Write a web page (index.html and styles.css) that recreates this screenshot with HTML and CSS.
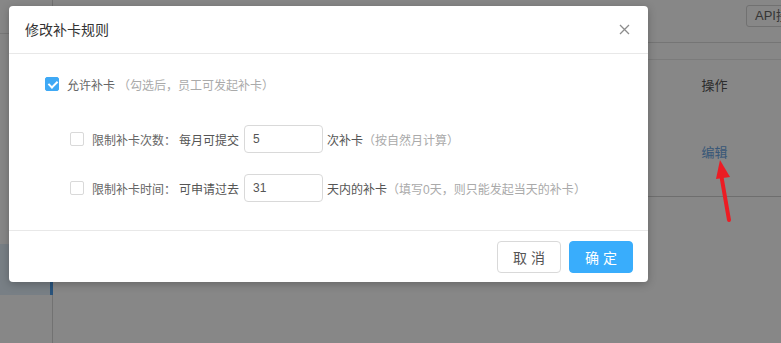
FILE: index.html
```html
<!DOCTYPE html>
<html lang="zh-CN">
<head>
    <meta charset="UTF-8">
    <title>修改补卡规则</title>
    <link rel="stylesheet" href="styles.css">
</head>
<body>

<div class="page">
    <aside class="side">
        <div class="side-logo"></div>
        <div class="side-menu">
            <div class="menu-item active"></div>
        </div>
    </aside>

    <main class="main">
        <div class="topbar">
            <span class="api-btn">API接口</span>
        </div>
        <div class="toolbar"></div>
        <table class="grid">
            <thead>
                <tr>
                    <th></th>
                    <th class="col-op">操作</th>
                </tr>
            </thead>
            <tbody>
                <tr>
                    <td></td>
                    <td class="col-op"><a class="link">编辑</a></td>
                </tr>
            </tbody>
        </table>
    </main>
</div>

<!-- 遮罩层 -->
<div class="mask"></div>

<!-- 标注箭头 -->
<svg class="arrow" width="781" height="343" viewBox="0 0 781 343">
    <line x1="729" y1="220" x2="721" y2="174" stroke="#ec1c24" stroke-width="4" stroke-linecap="round"/>
    <polygon points="720,160 730,177 716,179" fill="#ec1c24"/>
</svg>

<div class="dialog">
    <div class="dialog-header">
        <span class="dialog-title">修改补卡规则</span>
        <svg class="dialog-close" width="11" height="11" viewBox="0 0 11 11">
            <path d="M1 1 L10 10 M10 1 L1 10" stroke="#8c8c8c" stroke-width="1.3" fill="none"/>
        </svg>
    </div>

    <div class="dialog-body">
        <div class="rule-row">
            <span class="check checked"></span>
            <span class="label">允许补卡</span>
            <span class="hint"><span class="paren">（</span>勾选后，员工可发起补卡<span class="paren">）</span></span>
        </div>

        <div class="rule-row sub">
            <span class="check"></span>
            <span class="label">限制补卡次数：</span>
            <span class="text">每月可提交</span>
            <input class="num" type="text" value="5">
            <span class="text">次补卡</span>
            <span class="hint"><span class="paren">（</span>按自然月计算<span class="paren">）</span></span>
        </div>

        <div class="rule-row sub">
            <span class="check"></span>
            <span class="label">限制补卡时间：</span>
            <span class="text">可申请过去</span>
            <input class="num" type="text" value="31">
            <span class="text">天内的补卡</span>
            <span class="hint"><span class="paren">（</span>填写0天，则只能发起当天的补卡<span class="paren">）</span></span>
        </div>
    </div>

    <div class="dialog-footer">
        <button class="btn">取消</button>
        <button class="btn btn-primary">确定</button>
    </div>
</div>

</body>
</html>
```

FILE: styles.css
```css
* {
    box-sizing: border-box;
}
html, body {
    margin: 0;
    padding: 0;
    width: 781px;
    height: 343px;
    overflow: hidden;
}
body {
    position: relative;
    font-family: "Liberation Sans", "Noto Sans CJK SC", sans-serif;
    font-size: 12px;
    color: #333;
    background: #fff;
    text-spacing-trim: space-all;
}

/* 底层页面 */
.page {
    display: flex;
    height: 343px;
}
.side {
    width: 53px;
    flex-shrink: 0;
    border-right: 1px solid #d8d8d8;
    display: flex;
    flex-direction: column;
}
.side-logo {
    height: 34px;
    border-bottom: 1px solid #e2e2e2;
}
.side-menu {
    padding-top: 210px;
}
.menu-item {
    height: 51px;
}
.menu-item.active {
    width: 53px;
    margin-right: -1px;
    background: #e3f0fc;
    border-right: 3px solid #4f9de8;
}
.main {
    flex: 1;
    display: flex;
    flex-direction: column;
}
.topbar {
    height: 43px;
    border-bottom: 1px solid #dedede;
    display: flex;
    justify-content: flex-end;
    align-items: flex-start;
    padding-top: 5px;
}
.api-btn {
    height: 22px;
    line-height: 20px;
    padding: 0 8px;
    margin-right: -30px;
    border: 1px solid #d5d5d5;
    border-radius: 3px;
    color: #666;
    font-size: 13px;
}
.toolbar {
    height: 17px;
    border-bottom: 1px solid #e8e8e8;
}
.grid {
    width: 100%;
    border-collapse: collapse;
}
.grid th, .grid td {
    padding: 0;
    font-weight: normal;
}
.grid th {
    height: 48px;
    color: #555;
}
.grid td {
    height: 88px;
    border-bottom: 1px solid #d0d0d0;
}
.col-op {
    width: 133px;
    text-align: center;
    font-size: 13px;
}
.link {
    color: #6aa5e2;
}

.mask {
    position: absolute;
    left: 0;
    top: 0;
    width: 781px;
    height: 343px;
    background: rgba(0, 0, 0, 0.47);
}
.arrow {
    position: absolute;
    left: 0;
    top: 0;
}

/* 弹窗 */
.dialog {
    position: absolute;
    left: 9px;
    top: 6px;
    width: 639px;
    height: 276px;
    background: #fff;
    border-radius: 4px;
    box-shadow: 0 2px 8px rgba(0, 0, 0, 0.25);
    display: flex;
    flex-direction: column;
}
.dialog-header {
    height: 48px;
    padding: 0 18px 0 16px;
    border-bottom: 1px solid #e8e8e8;
    display: flex;
    align-items: center;
    justify-content: space-between;
}
.dialog-title {
    font-size: 14px;
    color: #333;
    padding-bottom: 1px;
}
.dialog-close {
    display: block;
}
.dialog-body {
    flex: 1;
    padding: 23px 0 0 36px;
}
.rule-row {
    display: flex;
    align-items: center;
    height: 14px;
    margin-bottom: 34px;
    color: #666;
}
.rule-row.sub {
    height: 28px;
    padding-left: 25px;
    margin-bottom: 21px;
}
.check {
    width: 14px;
    height: 14px;
    border: 1px solid #d9d9d9;
    border-radius: 2px;
    margin-right: 8px;
    position: relative;
}
.check.checked {
    background: #3fa9f5;
    border-color: #3fa9f5;
}
.check.checked::after {
    content: "";
    position: absolute;
    left: 4px;
    top: 1px;
    width: 4px;
    height: 7px;
    border: solid #fff;
    border-width: 0 2px 2px 0;
    transform: rotate(45deg);
}
.label {
    color: #666;
    margin-right: 3px;
}
.text {
    color: #555;
}
.hint {
    color: #aaa;
}
.paren {
    display: inline-block;
    width: 12px;
    text-align: center;
    font-family: "Liberation Sans", sans-serif;
}
.num {
    width: 79px;
    height: 28px;
    margin: 0 4px 0 5px;
    padding: 0 8px;
    border: 1px solid #d9d9d9;
    border-radius: 4px;
    font-family: "Liberation Sans", sans-serif;
    font-size: 12px;
    color: #555;
    outline: none;
}
.dialog-footer {
    height: 52px;
    border-top: 1px solid #e8e8e8;
    display: flex;
    justify-content: flex-end;
    align-items: flex-start;
    gap: 8px;
    padding: 10px 15px 0 0;
}
.btn {
    width: 64px;
    height: 32px;
    border: 1px solid #d9d9d9;
    border-radius: 4px;
    background: #fff;
    color: #555;
    font-family: "Liberation Sans", "Noto Sans CJK SC", sans-serif;
    font-size: 14px;
    letter-spacing: 4px;
    padding: 0 0 0 4px;
}
.btn-primary {
    background: #39adfc;
    border-color: #39adfc;
    color: #fff;
}
```
